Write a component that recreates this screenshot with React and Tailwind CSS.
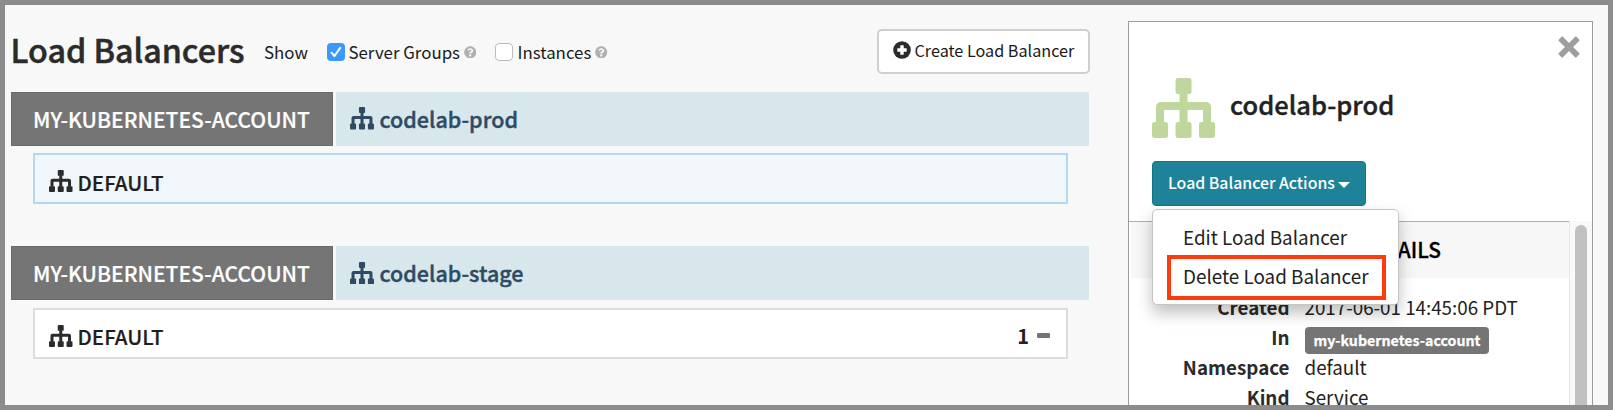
import { FaQuestionCircle } from 'react-icons/fa';

function Sitemap({ className }) {
  return (
    <svg viewBox="0 0 63 60" preserveAspectRatio="none" className={className} fill="currentColor">
      <rect x="23.5" y="0" width="16" height="16" rx="2.5" />
      <rect x="0" y="44" width="16" height="16" rx="2.5" />
      <rect x="23.5" y="44" width="16" height="16" rx="2.5" />
      <rect x="47" y="44" width="16" height="16" rx="2.5" />
      <rect x="27.5" y="14" width="8" height="32" />
      <path d="M4 46V29.500q0-5.500 5.500-5.500H53.500q5.500 0 5.500 5.500V46H51V32H12V46Z" />
    </svg>
  );
}

function PlusSign() {
  return (
    <svg viewBox="0 0 18 18" className="size-[18px] text-[#2b2b2b]">
      <circle cx="9" cy="9" r="8.8" fill="currentColor" />
      <path d="M7.300 4.300h3.400v3h3v3.400h-3v3h-3.400v-3h-3v-3.400h3z" fill="#fff" />
    </svg>
  );
}

function Remove() {
  return (
    <svg viewBox="0 0 22 22" className="size-[22px]" fill="#9e9e9e">
      <path d="M4.700.600 11 6.900 17.300.600q.5-.4 1 0l3.100 3.100q.4.5 0 1L15.100 11l6.300 6.300q.4.5 0 1l-3.100 3.100q-.5.4-1 0L11 15.100l-6.300 6.300q-.5.4-1 0L.600 18.300q-.4-.5 0-1L6.900 11 .600 4.700q-.4-.5 0-1L3.700.600q.5-.4 1 0Z" />
    </svg>
  );
}

function Group({ name, selected, count }) {
  return (
    <section className="h-[154.600px]">
      <div className="mr-[3px] flex h-[54px] gap-[3px]">
        <div className="w-[322px] border border-[#6a6a6a] bg-[#757575] pl-[21.500px] text-[21.050px] font-medium text-white">
          <div className="leading-[52px] [-webkit-text-stroke:0.200px_currentColor]">MY-KUBERNETES-ACCOUNT</div>
        </div>
        <div className="flex flex-1 items-center bg-[#d8e7ec] pl-[14.500px] text-[#2f4b63]">
          <Sitemap className="mr-[5.500px] h-[22.500px] w-6" />
          <span className="text-[21.500px] font-medium leading-[52px] [-webkit-text-stroke:0.400px_currentColor]">{name}</span>
        </div>
      </div>
      <div className={`ml-[22px] mr-6 mt-[7.600px] flex h-[51px] items-center border-2 pl-[14.500px] pr-4 ${selected ? 'border-[#b4d8ef] bg-[#f0f6f9]' : 'border-[#dcdcdc] bg-white'}`}>
        <Sitemap className="mr-[5px] mt-[5px] h-[22px] w-[23.500px] text-[#2b2b2b]" />
        <span className="pt-[6px] text-[20.500px] font-medium leading-[40px] text-[#1f1f1f] [-webkit-text-stroke:0.200px_currentColor]">DEFAULT</span>
        {count && (
          <span className="ml-auto flex items-center gap-[8px]">
            <span className="pt-[5px] text-[20px] font-bold leading-[40px] text-[#222]">{count}</span>
            <span className="mt-[4px] h-[5px] w-[13px] rounded-[1px] bg-[#757575]" />
          </span>
        )}
      </div>
    </section>
  );
}

function Detail({ label, children }) {
  return (
    <div className="flex h-[30px] gap-[15px] text-[18.800px] leading-[30px]">
      <div className="w-[160.500px] text-right font-bold text-[#2b2b2b]">{label}</div>
      <div className="text-[#222]">{children}</div>
    </div>
  );
}

export default function App() {
  return (
    <div className="flex h-[410px] w-[1613px] overflow-hidden border-[5px] border-[#8c8c8c] bg-[#f8f8f8] font-['Noto_Sans_CJK_SC','Open_Sans',sans-serif] text-[#1a1a1a]">
      <main className="w-[1087px] pl-[5.500px]">
        <header className="flex h-[86.600px] items-center">
          <h1 className="w-[253.500px] whitespace-nowrap pt-[2px] text-[32.250px] font-medium text-[#2b2b2b] [-webkit-text-stroke:0.500px_currentColor]">Load Balancers</h1>
          <div className="flex items-center pt-[7px] text-[16.850px] leading-6">
            <span className="w-[63px]">Show</span>
            <span className="mr-[3.500px] flex size-[18px] items-center justify-center rounded-[4px] bg-[#3b99fc]">
              <svg viewBox="0 0 18 18" className="size-[18px]" fill="none" stroke="#fff" strokeWidth="2" strokeLinecap="round" strokeLinejoin="round">
                <path d="M4.500 9.700 7.500 13 13.200 4.900" />
              </svg>
            </span>
            <span>Server Groups</span>
            <FaQuestionCircle className="ml-1 size-[12.500px] text-[#b0b0b0]" />
            <span className="ml-[19px] mr-[4px] size-[18px] rounded-[4px] border border-[#bdbdbd] bg-white" />
            <span>Instances</span>
            <FaQuestionCircle className="ml-1 size-[12.500px] text-[#b0b0b0]" />
          </div>
          <button className="ml-auto mr-[2px] mt-[6px] flex h-[45px] w-[213px] items-center rounded-[5px] border-2 border-[#cfcfcf] bg-white pl-[14px] text-[16.200px]">
            <span className="-mt-[3px]"><PlusSign /></span>
            <span className="-mt-[3px] ml-[3.500px] whitespace-nowrap">Create Load Balancer</span>
          </button>
        </header>
        <Group name="codelab-prod" selected />
        <Group name="codelab-stage" count="1" />
      </main>

      <aside className="relative ml-[36px] mt-4 flex w-[465px] flex-col border-x border-t border-[#9b9b9b] bg-white">
        <div className="h-[199px] pl-[23px]">
          <div className="flex h-[56px] justify-end pr-[12px] pt-[14px]">
            <Remove />
          </div>
          <div className="flex h-[60px] items-center">
            <Sitemap className="h-[60px] w-[63px] text-[#bfd79c]" />
            <h2 className="-mt-[8px] ml-[15px] text-[25.500px] font-medium leading-[40px] text-[#222] [-webkit-text-stroke:0.400px_currentColor]">codelab-prod</h2>
          </div>
          <button className="mt-[23px] flex h-[45px] w-[214px] items-center rounded-[4px] border border-[#147589] bg-[#1e8398] pb-px pl-[15px] text-[15.850px] font-medium text-white">
            <span className="whitespace-nowrap">Load Balancer Actions</span>
            <svg viewBox="0 0 12 6" className="ml-[3px] mt-[3px] h-[6px] w-[12px]" fill="currentColor"><path d="M0 0h12L6 6z" /></svg>
          </button>
        </div>
        <div className="flex min-h-0 flex-1">
          <div className="w-[440px] border-t border-[#b0b0b0]">
            <div className="ml-[2px] flex h-[56px] items-center justify-end bg-[#f7f7f7] pr-[128px] text-[20.900px] font-medium text-black">
              <span className="-mt-[2px] leading-[52px] [-webkit-text-stroke:0.300px_currentColor]">DETAILS</span>
            </div>
            <div className="pt-[14px]">
              <Detail label="Created">2017-06-01 14:45:06 PDT</Detail>
              <Detail label="In">
                <span className="mt-[5px] flex h-[27px] w-[184px] items-center rounded-[4px] bg-[#757575] pl-[9px] text-[14.200px] font-bold text-white"><span className="-mt-px [-webkit-text-stroke:0.250px_currentColor]">my-kubernetes-account</span></span>
              </Detail>
              <Detail label="Namespace">default</Detail>
              <Detail label="Kind">Service</Detail>
            </div>
          </div>
          <div className="flex-1 border-l border-[#e8e8e8] bg-[#f9f9f9] pl-[5px] pt-1">
            <div className="h-[200px] w-[12px] rounded-full bg-[#c1c1c1]" />
          </div>
        </div>
        <ul className="absolute left-[23px] top-[187px] h-[96px] w-[247px] rounded-[5px] border border-[#c4c4c4] bg-white pl-[14px] pt-[8px] text-[18.850px] text-[#222] shadow-[0_8px_16px_rgba(0,0,0,0.25)]">
          <li className="h-[37px] pl-[16px] leading-[38px]">Edit Load Balancer</li>
          <li className="h-[45px] w-[219px] border-4 border-[#ff3a0c] pl-[12px] leading-[33px]">Delete Load Balancer</li>
        </ul>
      </aside>
    </div>
  );
}
